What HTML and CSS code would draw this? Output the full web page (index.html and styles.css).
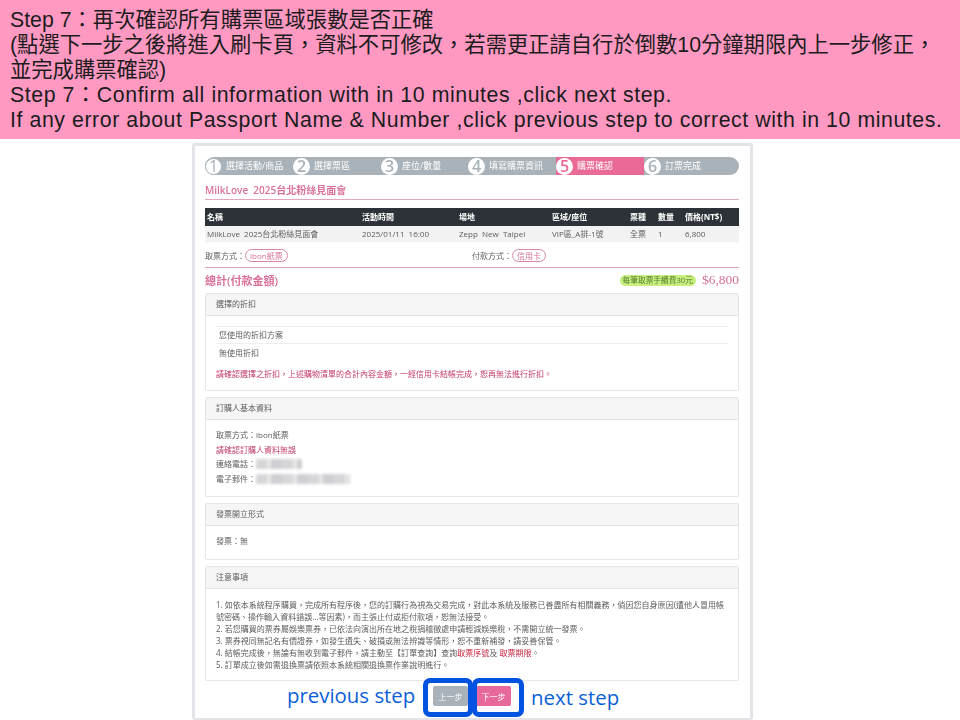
FILE: index.html
```html
<!DOCTYPE html>
<html lang="zh-Hant">
<head>
    <meta charset="UTF-8">
    <title>Step 7</title>
    <link rel="stylesheet" href="styles.css">
</head>
<body>
    <div class="banner">
        <p>Step 7：再次確認所有購票區域張數是否正確</p>
        <p>(點選下一步之後將進入刷卡頁，資料不可修改，若需更正請自行於倒數10分鐘期限內上一步修正，</p>
        <p>並完成購票確認)</p>
        <p class="en">Step 7：Confirm all information with in 10 minutes ,click next step.</p>
        <p class="en">If any error about Passport Name &amp; Number ,click previous step to correct with in 10 minutes.</p>
    </div>

    <div class="card">
        <div class="steps">
            <div class="step step-1"><span class="num hollow">1</span>選擇活動/商品</div>
            <div class="step step-2"><span class="num">2</span>選擇票區</div>
            <div class="step step-3"><span class="num">3</span>座位/數量</div>
            <div class="step step-4"><span class="num">4</span>填寫購票資訊</div>
            <div class="step step-5 active"><span class="num">5</span>購票確認</div>
            <div class="step step-6"><span class="num">6</span>訂票完成</div>
        </div>

        <h1 class="event-title">MilkLove&nbsp; 2025台北粉絲見面會</h1>

        <div class="order-table">
            <div class="order-row head">
                <span>名稱</span><span>活動時間</span><span>場地</span><span>區域/座位</span><span>票種</span><span>數量</span><span>價格(NT$)</span>
            </div>
            <div class="order-row">
                <span>MilkLove&nbsp; 2025台北粉絲見面會</span><span>2025/01/11&nbsp; 16:00</span><span>Zepp&nbsp; New&nbsp; Taipei</span><span>VIP區_A排-1號</span><span>全票</span><span>1</span><span>6,800</span>
            </div>
        </div>

        <div class="methods">
            <div class="method">取票方式：<span class="pill">ibon紙票</span></div>
            <div class="method">付款方式：<span class="pill">信用卡</span></div>
        </div>

        <div class="total">
            <span class="total-label">總計(付款金額)</span>
            <span class="fee">每筆取票手續費30元</span>
            <span class="total-price">$6,800</span>
        </div>

        <section class="panel panel-discount">
            <h2>選擇的折扣</h2>
            <div class="panel-body">
                <div class="discount-head">您使用的折扣方案</div>
                <div class="discount-value">無使用折扣</div>
                <p class="warn">請確認選擇之折扣，上述購物清單的合計內容金額，一經信用卡結帳完成，恕再無法進行折扣。</p>
            </div>
        </section>

        <section class="panel panel-buyer">
            <h2>訂購人基本資料</h2>
            <div class="panel-body">
                <p>取票方式：ibon紙票</p>
                <p class="warn">請確認訂購人資料無誤</p>
                <p>連絡電話：<span class="masked phone"></span></p>
                <p>電子郵件：<span class="masked mail"></span></p>
            </div>
        </section>

        <section class="panel panel-invoice">
            <h2>發票開立形式</h2>
            <div class="panel-body">
                <p>發票：無</p>
            </div>
        </section>

        <section class="panel panel-notes">
            <h2>注意事項</h2>
            <div class="panel-body">
                <p>1. 如依本系統程序購買，完成所有程序後，您的訂購行為視為交易完成，對此本系統及服務已善盡所有相關義務，倘因您自身原因(遭他人冒用帳號密碼、操作輸入資料錯誤...等因素)，而主張止付或拒付款項，恕無法接受。</p>
                <p>2. 若您購買的票券屬娛樂票券，已依法向演出所在地之稅捐稽徵處申請輕減娛樂稅，不需開立統一發票。</p>
                <p>3. 票券視同無記名有價證券，如發生遺失、破損或無法辨識等情形，恕不重新補發，請妥善保管。</p>
                <p>4. 結帳完成後，無論有無收到電子郵件，請主動至【訂單查詢】查詢<b>取票序號</b>及 <b>取票期限</b>。</p>
                <p>5. 訂單成立後如需退換票請依照本系統相關退換票作業說明進行。</p>
            </div>
        </section>

        <div class="actions">
            <button class="btn btn-prev">上一步</button>
            <button class="btn btn-next">下一步</button>
        </div>
    </div>

    <div class="note note-prev">previous step</div>
    <div class="note note-next">next step</div>
    <div class="mark mark-prev"></div>
    <div class="mark mark-next"></div>
</body>
</html>
```

FILE: styles.css
```css
* {
    margin: 0;
    padding: 0;
    box-sizing: border-box;
}

html, body {
    height: 720px;
    overflow: hidden;
}

body {
    position: relative;
    background: white;
    font-family: "Open Sans", "Noto Sans CJK TC", sans-serif;
}

.banner {
    height: 139px;
    padding: 8px 0 0 10px;
    background: #ff99c2;
    color: #1c1c1c;
    font-family: "Liberation Sans", "Noto Sans CJK TC", sans-serif;
    font-size: 21.3px;
    line-height: 25px;
    white-space: nowrap;
}

.banner .en {
    letter-spacing: 0.57px;
}

.card {
    width: 561px;
    height: 577px;
    margin: 4px 0 0 192px;
    padding: 11px 11px 0 10px;
    border: 3px solid #e3e3e8;
    border-bottom-width: 2px;
    border-radius: 3px;
    color: #5c5c5c;
    font-size: 8px;
    filter: blur(0.4px);
}

/* progress bar */
.steps {
    display: flex;
    height: 18px;
    background: #a9b2b9;
    border-radius: 9px;
    color: white;
    font-size: 9px;
    line-height: 18px;
}

.step {
    display: flex;
    align-items: center;
    gap: 4px;
}

.step-1 { width: 88px; }
.step-2 { width: 88px; }
.step-3 { width: 87px; }
.step-4 { width: 88px; }
.step-5 { width: 88px; }
.step-6 { flex: 1; }

.step.active {
    background: #ea6a97;
}

.num {
    display: flex;
    align-items: center;
    justify-content: center;
    width: 17px;
    height: 17px;
    background: white;
    border-radius: 50%;
    color: #a9b2b9;
    font-size: 16px;
    font-weight: 600;
    flex-shrink: 0;
}

.num.hollow {
    border: 1px solid #a9b2b9;
    font-weight: 400;
}

.active .num {
    color: #ea6a97;
}

.event-title {
    height: 25px;
    border-bottom: 1px solid #e3a6c0;
    color: #d9709a;
    font-size: 10px;
    font-weight: 600;
    line-height: 30px;
}

/* order table */
.order-table {
    margin-top: 8px;
}

.order-row {
    display: grid;
    grid-template-columns: 155px 97px 93px 78px 28px 27px 1fr;
    height: 16px;
    padding-left: 2px;
    background: #f2f2f2;
    font-size: 8px;
    line-height: 15px;
}

.order-row.head {
    height: 18px;
    background: #2d3238;
    color: white;
    font-weight: 700;
    line-height: 18px;
}

.methods {
    display: flex;
    height: 26px;
    padding-top: 2px;
    border-bottom: 1px solid #e3a6c0;
    align-items: center;
}

.method:first-child {
    width: 267px;
}

.pill {
    display: inline-block;
    height: 13px;
    padding: 0 4px;
    border: 1px solid #d986a8;
    border-radius: 7px;
    color: #d9709a;
    line-height: 11px;
}

.total {
    display: flex;
    align-items: center;
    height: 25px;
    padding-bottom: 1px;
}

.total-label {
    margin-right: auto;
    color: #d9709a;
    font-size: 11px;
    font-weight: 600;
}

.fee {
    height: 11px;
    padding: 0 3px;
    background: #c6ef7f;
    border-radius: 6px;
    color: #557a2a;
    font-size: 7.7px;
    line-height: 11px;
}

.total-price {
    margin-left: 6px;
    color: #d9709a;
    font-family: "Liberation Serif", serif;
    font-size: 13.5px;
}

/* panels */
.panel {
    margin-bottom: 6px;
    border: 1px solid #e6e6e6;
    border-radius: 2px;
}

.panel h2 {
    height: 22px;
    padding-left: 10px;
    background: #f5f5f5;
    border-bottom: 1px solid #e3e3e3;
    font-size: 8px;
    font-weight: 400;
    line-height: 19px;
}

.panel-body {
    padding: 10px;
}

.panel p {
    line-height: 14.5px;
}

.panel-discount { height: 98px; }
.panel-buyer { height: 100px; }
.panel-invoice { height: 57px; }
.panel-notes { height: 115px; margin-bottom: 0; }

.panel-buyer .panel-body,
.panel-invoice .panel-body {
    padding-top: 8px;
}

.discount-head {
    height: 18px;
    padding-left: 3px;
    border-top: 1px solid #eee;
    border-bottom: 1px solid #eee;
    line-height: 16px;
}

.discount-value {
    height: 18px;
    padding-left: 3px;
    line-height: 18px;
}

.warn {
    color: #c0396b;
}

.panel-discount .warn {
    margin-top: 5px;
}

.panel-buyer p {
    display: flex;
    align-items: center;
}

.masked {
    display: inline-block;
    height: 10px;
    filter: blur(1.6px);
    background: repeating-linear-gradient(90deg, #d6d6d9 0 11px, #e6e6e8 11px 15px, #cfcfd3 15px 26px);
}

.phone { width: 46px; }
.mail { width: 94px; }

.panel-notes p {
    line-height: 11.9px;
    font-size: 8.03px;
}

.panel-notes b {
    color: #c8203c;
    font-weight: 400;
}

.actions {
    display: flex;
    justify-content: center;
    gap: 8px;
    margin-top: 5px;
}

.btn {
    width: 35px;
    height: 20px;
    border: none;
    border-radius: 2px;
    color: white;
    font-family: "Noto Sans CJK TC", sans-serif;
    font-size: 8px;
}

.btn-prev { background: #a9b2b9; }
.btn-next { background: #e7689a; }

/* blue annotations drawn over the screenshot */
.note {
    position: absolute;
    color: #0a5fd6;
    font-size: 20.4px;
    line-height: 26px;
}

.note-prev {
    left: 287px;
    top: 682px;
}

.note-next {
    left: 531px;
    top: 684px;
}

.mark {
    position: absolute;
    top: 678px;
    height: 39px;
    border: 5px solid #0052e0;
    border-radius: 7px;
}

.mark-prev {
    left: 423px;
    width: 50px;
}

.mark-next {
    left: 472px;
    width: 52px;
}
```
